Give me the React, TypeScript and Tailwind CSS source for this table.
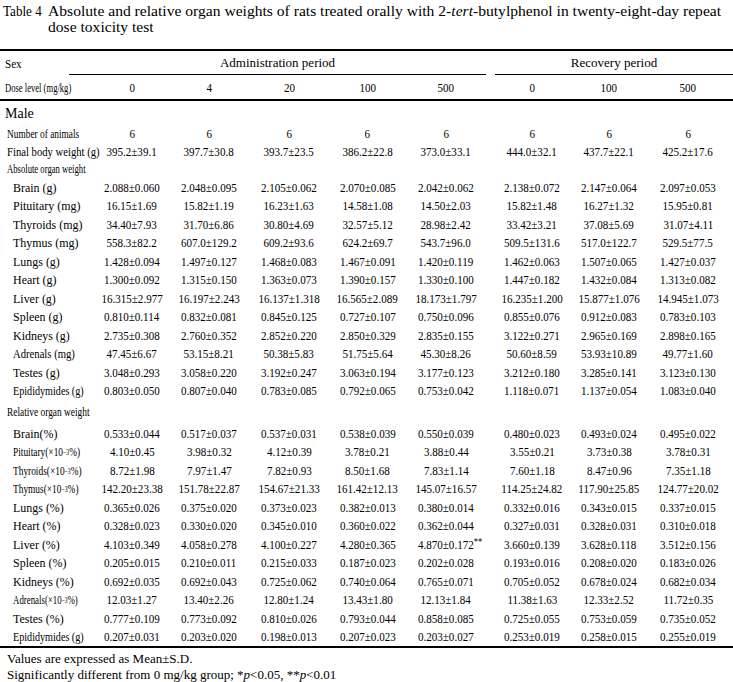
import React from "react";

const COLS =
  "grid grid-cols-[95px_74px_80px_80px_77px_80px_10px_72px_82px_76px]";

type Row = { label: React.ReactNode; lc?: string; v: string[] };

const X3 = (
  <>
    ×10<sup className="text-[8px] relative -top-[1px]">−3</sup>%
  </>
);

const abs: Row[] = [
  { label: "Brain (g)", v: ["2.088±0.060", "2.048±0.095", "2.105±0.062", "2.070±0.085", "2.042±0.062", "2.138±0.072", "2.147±0.064", "2.097±0.053"] },
  { label: "Pituitary (mg)", v: ["16.15±1.69", "15.82±1.19", "16.23±1.63", "14.58±1.08", "14.50±2.03", "15.82±1.48", "16.27±1.32", "15.95±0.81"] },
  { label: "Thyroids (mg)", v: ["34.40±7.93", "31.70±6.86", "30.80±4.69", "32.57±5.12", "28.98±2.42", "33.42±3.21", "37.08±5.69", "31.07±4.11"] },
  { label: "Thymus (mg)", v: ["558.3±82.2", "607.0±129.2", "609.2±93.6", "624.2±69.7", "543.7±96.0", "509.5±131.6", "517.0±122.7", "529.5±77.5"] },
  { label: "Lungs (g)", v: ["1.428±0.094", "1.497±0.127", "1.468±0.083", "1.467±0.091", "1.420±0.119", "1.462±0.063", "1.507±0.065", "1.427±0.037"] },
  { label: "Heart (g)", v: ["1.300±0.092", "1.315±0.150", "1.363±0.073", "1.390±0.157", "1.330±0.100", "1.447±0.182", "1.432±0.084", "1.313±0.082"] },
  { label: "Liver (g)", v: ["16.315±2.977", "16.197±2.243", "16.137±1.318", "16.565±2.089", "18.173±1.797", "16.235±1.200", "15.877±1.076", "14.945±1.073"] },
  { label: "Spleen (g)", v: ["0.810±0.114", "0.832±0.081", "0.845±0.125", "0.727±0.107", "0.750±0.096", "0.855±0.076", "0.912±0.083", "0.783±0.103"] },
  { label: "Kidneys (g)", v: ["2.735±0.308", "2.760±0.352", "2.852±0.220", "2.850±0.329", "2.835±0.155", "3.122±0.271", "2.965±0.169", "2.898±0.165"] },
  { label: "Adrenals (mg)", lc: "scale-x-[0.82]", v: ["47.45±6.67", "53.15±8.21", "50.38±5.83", "51.75±5.64", "45.30±8.26", "50.60±8.59", "53.93±10.89", "49.77±1.60"] },
  { label: "Testes (g)", v: ["3.048±0.293", "3.058±0.220", "3.192±0.247", "3.063±0.194", "3.177±0.123", "3.212±0.180", "3.285±0.141", "3.123±0.130"] },
  { label: "Epididymides (g)", lc: "scale-x-[0.78]", v: ["0.803±0.050", "0.807±0.040", "0.783±0.085", "0.792±0.065", "0.753±0.042", "1.118±0.071", "1.137±0.054", "1.083±0.040"] },
];

const rel: Row[] = [
  { label: "Brain(%)", v: ["0.533±0.044", "0.517±0.037", "0.537±0.031", "0.538±0.039", "0.550±0.039", "0.480±0.023", "0.493±0.024", "0.495±0.022"] },
  { label: <>Pituitary({X3})</>, lc: "scale-x-[0.72]", v: ["4.10±0.45", "3.98±0.32", "4.12±0.39", "3.78±0.21", "3.88±0.44", "3.55±0.21", "3.73±0.38", "3.78±0.31"] },
  { label: <>Thyroids({X3})</>, lc: "scale-x-[0.72]", v: ["8.72±1.98", "7.97±1.47", "7.82±0.93", "8.50±1.68", "7.83±1.14", "7.60±1.18", "8.47±0.96", "7.35±1.18"] },
  { label: <>Thymus({X3})</>, lc: "scale-x-[0.72]", v: ["142.20±23.38", "151.78±22.87", "154.67±21.33", "161.42±12.13", "145.07±16.57", "114.25±24.82", "117.90±25.85", "124.77±20.02"] },
  { label: "Lungs (%)", v: ["0.365±0.026", "0.375±0.020", "0.373±0.023", "0.382±0.013", "0.380±0.014", "0.332±0.016", "0.343±0.015", "0.337±0.015"] },
  { label: "Heart (%)", v: ["0.328±0.023", "0.330±0.020", "0.345±0.010", "0.360±0.022", "0.362±0.044", "0.327±0.031", "0.328±0.031", "0.310±0.018"] },
  { label: "Liver (%)", v: ["4.103±0.349", "4.058±0.278", "4.100±0.227", "4.280±0.365", "4.870±0.172**", "3.660±0.139", "3.628±0.118", "3.512±0.156"] },
  { label: "Spleen (%)", v: ["0.205±0.015", "0.210±0.011", "0.215±0.033", "0.187±0.023", "0.202±0.028", "0.193±0.016", "0.208±0.020", "0.183±0.026"] },
  { label: "Kidneys (%)", v: ["0.692±0.035", "0.692±0.043", "0.725±0.062", "0.740±0.064", "0.765±0.071", "0.705±0.052", "0.678±0.024", "0.682±0.034"] },
  { label: <>Adrenals({X3})</>, lc: "scale-x-[0.68]", v: ["12.03±1.27", "13.40±2.26", "12.80±1.24", "13.43±1.80", "12.13±1.84", "11.38±1.63", "12.33±2.52", "11.72±0.35"] },
  { label: "Testes (%)", v: ["0.777±0.109", "0.773±0.092", "0.810±0.026", "0.793±0.044", "0.858±0.085", "0.725±0.055", "0.753±0.059", "0.735±0.052"] },
  { label: "Epididymides (g)", lc: "scale-x-[0.78]", v: ["0.207±0.031", "0.203±0.020", "0.198±0.013", "0.207±0.023", "0.203±0.027", "0.253±0.019", "0.258±0.015", "0.255±0.019"] },
];

function Val({ v }: { v: string }) {
  const star = v.endsWith("**");
  const t = star ? v.slice(0, -2) : v;
  return (
    <div className="flex justify-center">
      <span className="relative inline-block scale-x-[0.85] whitespace-nowrap">
        {t}
        {star && (
          <span className="absolute left-full top-[-1px] text-[10px]">**</span>
        )}
      </span>
    </div>
  );
}

function ValRow({ label, vals, lc, h }: { label: React.ReactNode; vals: string[]; lc: string; h: string }) {
  return (
    <div className={`${COLS} ${h} items-center`}>
      <div className="pl-[7px] whitespace-nowrap">
        <span className={`inline-block origin-left ${lc}`}>{label}</span>
      </div>
      {vals.slice(0, 5).map((d, i) => (
        <Val key={i} v={d} />
      ))}
      <div />
      {vals.slice(5).map((d, i) => (
        <Val key={i + 5} v={d} />
      ))}
    </div>
  );
}

function DataRow({ r }: { r: Row }) {
  const vals = r.v;
  return (
    <div className={`${COLS} h-[18.5px] items-center`}>
      <div className="pl-[13px] whitespace-nowrap">
        <span className={`inline-block origin-left ${r.lc ?? "scale-x-[0.92]"}`}>{r.label}</span>
      </div>
      {vals.slice(0, 5).map((v, i) => (
        <Val key={i} v={v} />
      ))}
      <div />
      {vals.slice(5).map((v, i) => (
        <Val key={i + 5} v={v} />
      ))}
    </div>
  );
}

export default function App() {
  const ns = ["6", "6", "6", "6", "6", "6", "6", "6"];
  const fb = ["395.2±39.1", "397.7±30.8", "393.7±23.5", "386.2±22.8", "373.0±33.1", "444.0±32.1", "437.7±22.1", "425.2±17.6"];
  const doses = ["0", "4", "20", "100", "500", "0", "100", "500"];
  return (
    <div className="w-[733px] h-[682px] bg-white text-black overflow-hidden font-['Liberation_Serif',serif] text-[13px] leading-none">
      {/* Title */}
      <div className="flex pt-[3px] text-[15.6px] leading-[16px]">
        <div className="w-[48px] pl-[3px] shrink-0 whitespace-nowrap overflow-hidden">
          <span className="inline-block origin-left scale-x-[0.84]">Table 4</span>
        </div>
        <div className="whitespace-nowrap">
          <div>
            Absolute and relative organ weights of rats treated orally with 2-<i>tert</i>-butylphenol in twenty-eight-day repeat
          </div>
          <div>dose toxicity test</div>
        </div>
      </div>

      {/* Top rule */}
      <div className="mt-[14px] border-t-2 border-black" />

      {/* Header 1 */}
      <div className="grid grid-cols-[69px_417px_9px_1fr] h-[24px]">
        <div className="flex items-center pl-[5px]">
          <span className="inline-block origin-left scale-x-[0.85]">Sex</span>
        </div>
        <div className="flex items-center justify-center border-b border-black">
          <span>Administration period</span>
        </div>
        <div />
        <div className="flex items-center justify-center border-b border-black">
          <span>Recovery period</span>
        </div>
      </div>

      {/* Header 2 */}
      <div className={`${COLS} h-[24px] items-center`}>
        <div className="pl-[5px] whitespace-nowrap">
          <span className="inline-block origin-left scale-x-[0.66]">Dose level (mg/kg)</span>
        </div>
        {doses.slice(0, 5).map((d, i) => (
          <Val key={i} v={d} />
        ))}
        <div />
        {doses.slice(5).map((d, i) => (
          <Val key={i + 5} v={d} />
        ))}
      </div>
      <div className="border-t-2 border-black" />

      {/* Male */}
      <div className="h-[23px] flex items-center pl-[5px] pt-[2px] text-[14px]">Male</div>

      <ValRow label="Number of animals" vals={ns} lc="scale-x-[0.72]" h="h-[18px]" />
      <ValRow label="Final body weight (g)" vals={fb} lc="scale-x-[0.82]" h="h-[18px]" />

      <div className="h-[18px] flex items-center pl-[7px] whitespace-nowrap text-[12px]">
        <span className="inline-block origin-left scale-x-[0.72]">Absolute organ weight</span>
      </div>

      {abs.map((r, i) => (
        <DataRow key={i} r={r} />
      ))}

      <div className="h-[24px] flex items-center pl-[7px] whitespace-nowrap text-[12px]">
        <span className="inline-block origin-left scale-x-[0.78]">Relative organ weight</span>
      </div>

      {rel.map((r, i) => (
        <DataRow key={i} r={r} />
      ))}

      <div className="border-t-2 border-black" />

      <div className="pl-[7px] pt-[3px] leading-[16px] text-[13px] whitespace-nowrap">
        <div>Values are expressed as Mean±S.D.</div>
        <div>
          Significantly different from 0 mg/kg group; *<i>p</i>&lt;0.05, **<i>p</i>&lt;0.01
        </div>
      </div>
    </div>
  );
}
